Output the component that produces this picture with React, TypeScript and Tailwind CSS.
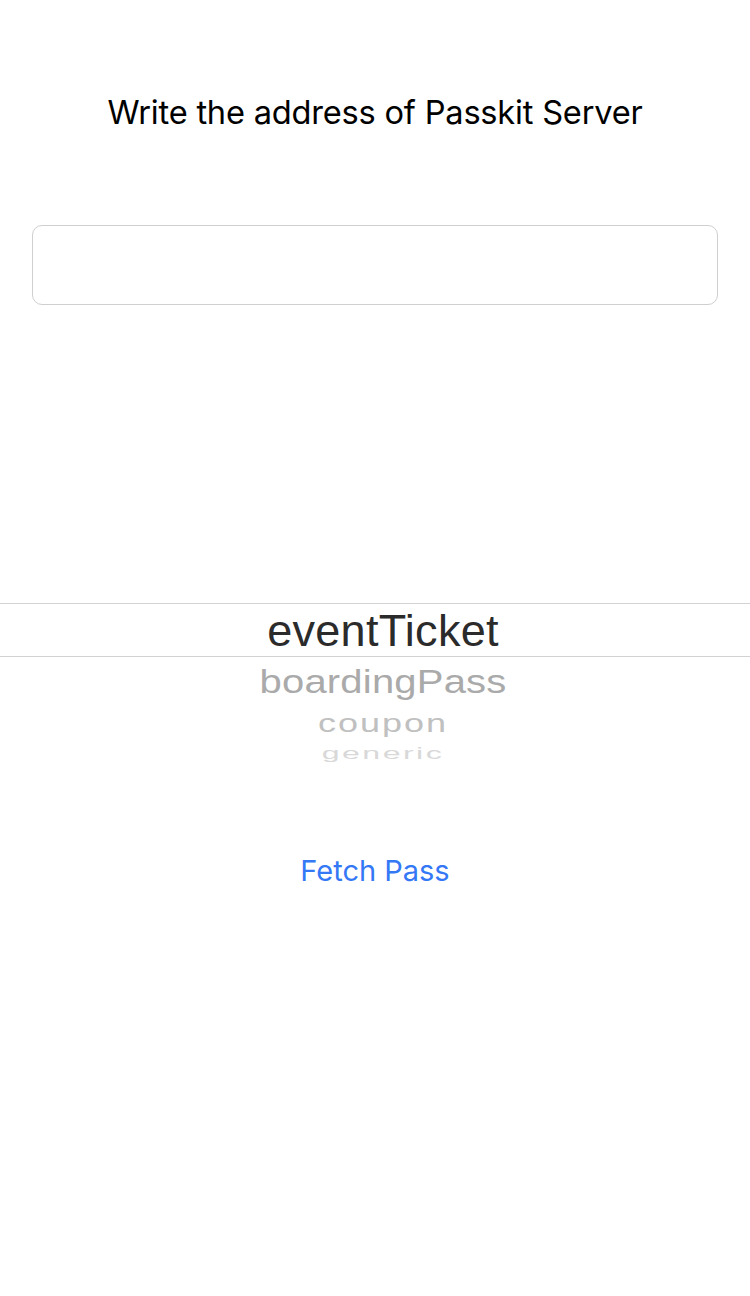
import React from 'react';

const sans = { fontFamily: 'Inter, "Noto Sans", sans-serif' };

export default function App() {
  return (
    <div className="w-[750px] h-[1296px] bg-white flex flex-col items-center" style={sans}>
      <h1 className="mt-[92px] text-[32.6px] leading-[40px] text-black tracking-[-0.2px]">
        Write the address of Passkit Server
      </h1>

      <input
        type="text"
        className="mt-[93px] w-[686px] h-[80px] border border-[#cfcfcf] rounded-[10px] outline-none px-4 text-[30px]"
      />

      {/* picker wheel */}
      <div className="mt-[298px] w-full flex flex-col items-center font-['Liberation_Sans',Arial,sans-serif]">
        <div className="w-full h-[54px] border-y border-[#d2d2d2] flex items-center justify-center">
          <span className="pl-[16px] text-[45px] leading-none text-[#2b2b2b] tracking-[0.3px]">eventTicket</span>
        </div>
        <span className="pl-[16px] mt-[4px] text-[40px] leading-[40px] text-[#aaaaaa] tracking-[0.2px] scale-y-[0.85]">boardingPass</span>
        <span className="pl-[16px] mt-[5px] text-[36px] leading-[36px] text-[#c0c0c0] tracking-[2px] scale-y-[0.7]">coupon</span>
        <span className="pl-[16px] -mt-[3px] text-[32px] leading-[28px] text-[#d8d8d8] tracking-[2.5px] scale-y-[0.5]">generic</span>
      </div>

      <button className="mt-[86px] text-[29px] leading-[36px] text-[#3478f6]">Fetch Pass</button>
    </div>
  );
}
